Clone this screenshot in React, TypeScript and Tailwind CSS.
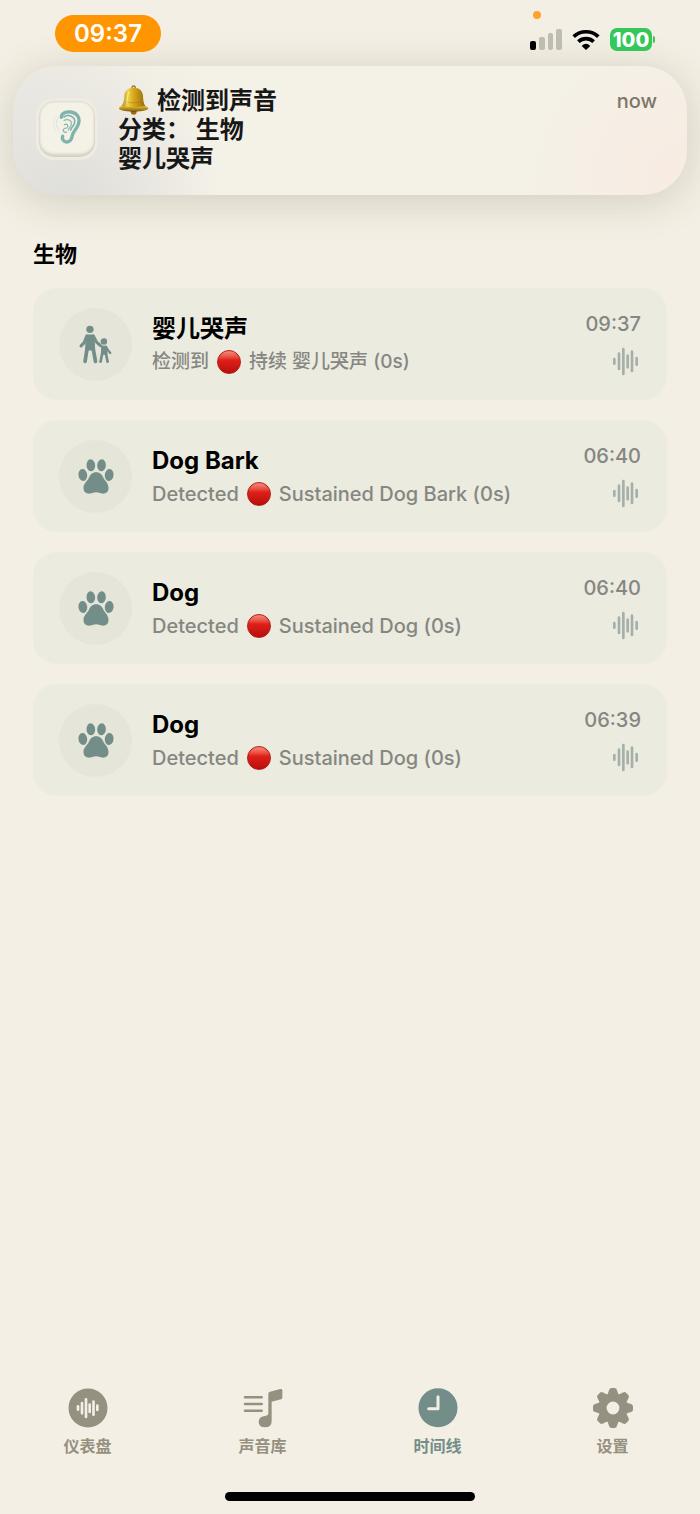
import React from "react";

type IconProps = { className?: string };

function SignalIcon() {
  return (
    <svg width="32" height="21" viewBox="0 0 32 21" aria-label="Signal">
      <rect x="0" y="12" width="6" height="9" rx="2" fill="#000" />
      <rect x="9" y="8" width="6" height="13" rx="2" fill="#bfbcb1" />
      <rect x="18" y="4" width="5" height="17" rx="2" fill="#bfbcb1" />
      <rect x="26" y="0" width="6" height="21" rx="2" fill="#bfbcb1" />
    </svg>
  );
}

function WifiIcon() {
  return (
    <svg width="28" height="21" viewBox="0 0 84 63" aria-label="Wi-Fi">
      <g fill="none" stroke="#000" strokeWidth="11">
        <path d="M5 23a54 54 0 0 1 74 0" />
        <path d="M19 38a34 34 0 0 1 46 0" />
      </g>
      <path d="M42 63 29 51q13-13 26 0Z" fill="#000" />
    </svg>
  );
}

function BellIcon() {
  return (
    <svg width="31" height="30" viewBox="0 0 93 90" role="img" aria-label="🔔">
      <defs>
        <linearGradient id="bellBody" x1="0" x2="1" y1="0" y2="0">
          <stop offset="0" stopColor="#8d6a12" />
          <stop offset="0.3" stopColor="#f2d24a" />
          <stop offset="0.5" stopColor="#d9a91c" />
          <stop offset="0.8" stopColor="#a87c0f" />
          <stop offset="1" stopColor="#6f5410" />
        </linearGradient>
        <linearGradient id="bellRim" x1="0" x2="0" y1="0" y2="1">
          <stop offset="0" stopColor="#e6bf34" />
          <stop offset="1" stopColor="#7d5a0c" />
        </linearGradient>
      </defs>
      <circle cx="47" cy="8" r="5" fill="none" stroke="#a07a18" strokeWidth="4" />
      <circle cx="47" cy="80" r="9" fill="#a06a14" />
      <path
        d="M47 8c18 0 27 10 28 25 1 20 3 28 15 38H3c12-10 15-18 16-38C20 18 29 8 47 8Z"
        fill="url(#bellBody)"
      />
      <path d="M3 70q1-5 8-7 36 7 71 0 8 2 9 7 0 9-44 10Q2 79 3 70Z" fill="url(#bellRim)" />
      <path d="M21 51q25 5 51 0" fill="none" stroke="#8f6c12" strokeWidth="2" opacity="0.6" />
      <path d="M34 20q-6 12-7 34" fill="none" stroke="#fbeb9a" strokeWidth="4" opacity="0.7" strokeLinecap="round" />
      <path d="M38 78q9 5 18 0" fill="none" stroke="#7a4a0c" strokeWidth="2" />
    </svg>
  );
}

function EarIcon() {
  return (
    <svg width="30" height="34" viewBox="60 88 90 102" className="mb-1" aria-hidden="true">
      <g fill="none" stroke="#7fb3ab" strokeLinecap="round">
        <path d="M88 110c0-13 16-18 29-16 20 3 28 19 22 37-5 16-17 21-19 37-2 15-16 20-25 12-4-4-5-8-3-13" strokeWidth="10" />
        <path d="M96 109c13-10 34-2 32 16-2 11-9 14-12 23" strokeWidth="5" />
        <path d="M96 120c11-8 25 0 22 12-2 8-8 9-9 16" strokeWidth="4" opacity="0.8" />
        <path d="M97 132c9-5 14 4 8 9-6 3-9 1-11 6s4 10 10 7" strokeWidth="3.500" />
        <path d="M82 109c-13 9-13 29 0 39" strokeWidth="2" opacity="0.35" />
        <path d="M74 107c-14 12-13 34 1 45" strokeWidth="2" opacity="0.2" />
      </g>
    </svg>
  );
}

function FamilyIcon() {
  return (
    <svg
      width="35"
      height="39"
      viewBox="85 73 104 116"
      fill="currentColor"
      stroke="currentColor"
      strokeLinecap="round"
      strokeLinejoin="round"
      aria-hidden="true"
    >
      <circle cx="120.500" cy="86" r="11" stroke="none" />
      <path d="M112 105h18l2 40h-22Z" strokeWidth="8" />
      <path d="m111 106-8 20-9 9M131 106l9 18 10 9" fill="none" strokeWidth="9" />
      <path d="m112 143-6 38M130 143l7 38" fill="none" strokeWidth="11" />
      <circle cx="162" cy="122" r="9.500" stroke="none" />
      <path d="M157 138h11l1 20h-12Z" strokeWidth="7" />
      <path d="m157 138-12-10M168 138l6 10 7 8" fill="none" strokeWidth="7" />
      <path d="m157 157-5 25M168 157l5 25" fill="none" strokeWidth="8" />
    </svg>
  );
}

function PawIcon() {
  return (
    <svg width="36" height="35" viewBox="83 86 107 105" fill="currentColor" aria-hidden="true">
      <ellipse cx="97" cy="134" rx="13" ry="18" transform="rotate(-6 97 134)" />
      <ellipse cx="121" cy="105" rx="13" ry="18" transform="rotate(-4 121 105)" />
      <ellipse cx="153" cy="105" rx="13" ry="18" transform="rotate(4 153 105)" />
      <ellipse cx="176" cy="134" rx="13" ry="18" transform="rotate(6 176 134)" />
      <path d="M137 126c12 0 18 8 22 17 5 9 15 16 15 30 0 11-7 17-16 17-8 0-13-4-21-4s-13 4-21 4c-10 0-17-6-17-17 0-14 11-20 16-30 4-9 10-17 22-17Z" />
    </svg>
  );
}

function WaveIcon() {
  return (
    <svg
      width="27"
      height="29"
      viewBox="154 139 81 87"
      className="text-[#a4b0a9]"
      stroke="currentColor"
      strokeWidth="8"
      strokeLinecap="round"
      aria-hidden="true"
    >
      <path d="M161 175v14M175 159v46M188 145v75M201 165v35M214 153v58M228 172v20" />
    </svg>
  );
}

function DashboardIcon({ className }: IconProps) {
  return (
    <svg viewBox="82 56 120 120" className={className} aria-hidden="true">
      <circle cx="142" cy="116" r="58.500" fill="currentColor" />
      <path
        d="M112 111v10M124 101v31M136 90v53M147 106v22M158.500 97v39M170 109v13"
        stroke="#f3efe4"
        strokeWidth="8"
        strokeLinecap="round"
      />
    </svg>
  );
}

function LibraryIcon({ className }: IconProps) {
  return (
    <svg viewBox="606 56 120 120" className={className} fill="currentColor" aria-hidden="true">
      <path d="M612 84h50M612 104h50M612 124h50" stroke="currentColor" strokeWidth="7.500" strokeLinecap="round" />
      <path d="M682 73q0-5 5-6l31-8q6-1 6 4v22q0 4-4 5l-28 7v58q0 19-20 19-19 0-19-17 0-16 22-18 7-1 7-6Z" />
    </svg>
  );
}

function ClockIcon({ className }: IconProps) {
  return (
    <svg viewBox="81 56 120 120" className={className} aria-hidden="true">
      <circle cx="141" cy="115" r="58.500" fill="currentColor" />
      <path
        d="M141 82v36h-28"
        fill="none"
        stroke="#f3efe4"
        strokeWidth="9"
        strokeLinecap="round"
        strokeLinejoin="round"
      />
    </svg>
  );
}

function GearIcon({ className }: IconProps) {
  return (
    <svg viewBox="-61 -61 122 122" className={className} aria-hidden="true">
      <g fill="currentColor">
        <circle r="45" />
        {[0, 45, 90, 135, 180, 225, 270, 315].map((angle) => (
          <path
            key={angle}
            d="M-17-40-12-55q2-6 7-6H5q5 0 7 6l5 15Z"
            transform={`rotate(${angle})`}
          />
        ))}
      </g>
      <circle r="19.500" fill="#f3efe4" />
    </svg>
  );
}

const events = [
  { title: "婴儿哭声", before: "检测到", after: "持续 婴儿哭声 (0s)", time: "09:37", lang: "zh", Icon: FamilyIcon },
  { title: "Dog Bark", before: "Detected", after: "Sustained Dog Bark (0s)", time: "06:40", lang: "en", Icon: PawIcon },
  { title: "Dog", before: "Detected", after: "Sustained Dog (0s)", time: "06:40", lang: "en", Icon: PawIcon },
  { title: "Dog", before: "Detected", after: "Sustained Dog (0s)", time: "06:39", lang: "en", Icon: PawIcon },
];

const tabs = [
  { label: "仪表盘", Icon: DashboardIcon, active: false },
  { label: "声音库", Icon: LibraryIcon, active: false },
  { label: "时间线", Icon: ClockIcon, active: true },
  { label: "设置", Icon: GearIcon, active: false },
];

function StatusBar() {
  return (
    <header className="relative z-10 flex h-[66px] items-start justify-between pl-[55px] pr-[45px] pt-[15px]">
      <div className="flex h-[37px] w-[106px] items-center justify-center rounded-full bg-[#ff9500] text-2xl font-semibold text-white">
        09:37
      </div>
      <div className="flex h-[49px] items-center gap-[10px]">
        <div className="relative">
          <SignalIcon />
          <span className="absolute -top-[18px] left-[3px] size-2 rounded-full bg-[#ffa22e]" />
        </div>
        <WifiIcon />
        <div className="flex items-center gap-px">
          <span className="flex h-[23px] w-[42px] items-center justify-center rounded-[7px] bg-[#34c759] text-xl font-extrabold text-white">
            100
          </span>
          <span className="h-[7px] w-[2px] rounded-r-full bg-[#34c759]" />
        </div>
      </div>
    </header>
  );
}

function Banner() {
  return (
    <section
      aria-label="Notification"
      className="mx-[13px] flex items-center gap-5 rounded-[44px] bg-[#f4f1e7] bg-[radial-gradient(circle_at_8%_110%,#dededa_0%,#dededa00_24%),linear-gradient(90deg,#ebe9e3_0%,#ebe9e300_30%),radial-gradient(circle_at_100%_90%,#f8ebe2_0%,#f8ebe200_24%)] pb-[22px] pl-[23px] pr-[26px] pt-[19px] shadow-[0_6px_40px_rgba(60,55,30,0.18)]"
    >
      <div className="flex size-[62px] shrink-0 items-center justify-center rounded-[18px] border-3 border-[#eeece2] bg-[#f4f2e7] shadow-[inset_0_-3px_3px_#d3d0c4,inset_-1px_0_2px_#dbd8cc,inset_1px_1px_2px_#dedbd0]">
        <EarIcon />
      </div>
      <div className="flex-1 text-2xl/[29px] font-bold text-[#171717]">
        <p className="flex items-center gap-2">
          <BellIcon />
          检测到声音
        </p>
        <p>分类： 生物</p>
        <p>婴儿哭声</p>
      </div>
      <time className="self-start pr-1 text-xl/8 font-medium text-[#7d766a]">now</time>
    </section>
  );
}

export default function App() {
  return (
    <div className="flex min-h-screen flex-col bg-[#f3efe4] font-['Inter','Noto_Sans_CJK_SC',sans-serif]">
      <StatusBar />
      <Banner />

      <main className="px-[33px] pt-[43px]">
        <h2 className="text-[22px]/[32px] font-bold text-black">生物</h2>
        <ul className="mt-[18px] flex flex-col gap-5">
          {events.map(({ title, before, after, time, lang, Icon }, i) => (
            <li key={i} className="flex h-[112px] items-center gap-5 rounded-3xl bg-[#ebebdf] px-[26px]">
              <div className="flex size-[73px] shrink-0 items-center justify-center rounded-full bg-[#e5e5da] text-[#738d88]">
                <Icon />
              </div>
              <div lang={lang} className="min-w-0 flex-1 pt-1">
                <h3 className="text-2xl/[32px] font-bold text-black">{title}</h3>
                <p
                  className={`flex items-center gap-2 font-medium text-[#868682] ${
                    lang === "zh" ? "text-[19px]/[34px]" : "text-xl/[34px]"
                  }`}
                >
                  {before}
                  <span
                    role="img"
                    aria-label="🔴"
                    className="size-6 rounded-full border border-[#b51a14] bg-linear-to-b from-[#f58b7c] via-[#e0201b] via-40% to-[#b80f0c]"
                  />
                  {after}
                </p>
              </div>
              <div className="flex flex-col items-end gap-[11px]">
                <time className="text-xl/6 font-medium text-[#868682]">{time}</time>
                <div className="pr-[2px]">
                  <WaveIcon />
                </div>
              </div>
            </li>
          ))}
        </ul>
      </main>

      <nav className="mt-auto grid grid-cols-4 pt-10">
        {tabs.map(({ label, Icon, active }) => (
          <button
            key={label}
            type="button"
            aria-current={active ? "page" : undefined}
            className={`flex flex-col items-center gap-1.5 text-base/6 font-semibold ${
              active ? "text-[#738d88]" : "text-[#969080]"
            }`}
          >
            <Icon className="size-10" />
            {label}
          </button>
        ))}
      </nav>
      <div className="mx-auto mb-[13px] mt-[34px] h-[9px] w-[250px] rounded-full bg-black" />
    </div>
  );
}
